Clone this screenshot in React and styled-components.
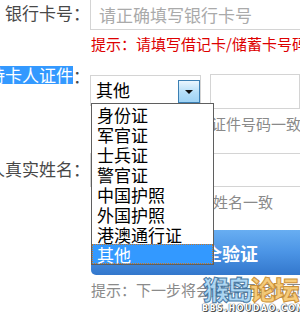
import React from 'react'
import styled, {createGlobalStyle} from 'styled-components'

const Global = createGlobalStyle`
    html, body {
        margin: 0;
        padding: 0;
        overflow: hidden;
        background: #fff;
    }
    body {
        font-family: "Noto Sans CJK SC", "Noto Sans", sans-serif;
    }
`

const Page = styled.form`
    position: relative;
    width: 300px;
    height: 316px;
    overflow: hidden;
`

const Row = styled.div`
    display: flex;
    align-items: ${p => p.top ? 'flex-start' : 'center'};
    height: ${p => p.h}px;
    margin-top: ${p => p.gap || 0}px;
`

const Label = styled.label`
    flex: 0 0 90px;
    min-width: 0;
    display: flex;
    justify-content: flex-end;
    white-space: nowrap;
    font-size: 17px;
    line-height: 20px;
    color: #484848;
    margin-top: ${p => p.shift || 0}px;
`

const Picked = styled.span`
    display: inline-block;
    height: 18px;
    line-height: 18px;
    background: #3399ff;
    color: #fff;
`

const Field = styled.div`
    flex: 0 0 auto;
    box-sizing: border-box;
    width: ${p => p.w}px;
    height: 100%;
    margin-left: ${p => p.left || 0}px;
    border: 1px solid #d4d4d4;
    border-top-width: ${p => p.open ? 0 : 1}px;
    display: flex;
    align-items: center;
    padding-left: 8px;
    font-size: 17px;
    color: #aaa;
    white-space: nowrap;
`

const Hint = styled.div`
    margin-top: ${p => p.gap}px;
    padding-left: ${p => p.indent || 91}px;
    height: 20px;
    line-height: 20px;
    font-size: 15px;
    white-space: nowrap;
    color: ${p => p.warn ? '#dd0000' : '#8a8a8a'};
`

const Select = styled.div`
    position: relative;
    box-sizing: border-box;
    width: 126px;
    height: 31px;
    margin-top: 1px;
    border: 1px solid #d4d4d4;
    display: flex;
    align-items: flex-start;
    padding-top: 4px;
`

const Value = styled.span`
    flex: 1;
    padding-left: 5px;
    font-size: 17px;
    line-height: 20px;
    color: #000;
`

const Arrow = styled.span`
    box-sizing: border-box;
    width: 22px;
    height: 23px;
    border: 1px solid #3b7fb3;
    background: linear-gradient(#eaf6fe, #b4def8 55%, #9fd3f5);
    display: flex;
    align-items: center;
    justify-content: center;
    &::after {
        content: '';
        border-left: 4px solid transparent;
        border-right: 4px solid transparent;
        border-top: 4px solid #111;
    }
`

const List = styled.ul`
    position: absolute;
    left: 0;
    top: 27px;
    z-index: 2;
    box-sizing: border-box;
    width: 123px;
    margin: 0;
    padding: 0;
    list-style: none;
    background: #fff;
    border: 1px solid #5f5f5f;
`

const Item = styled.li`
    box-sizing: border-box;
    height: 20px;
    line-height: 19px;
    padding-left: 4px;
    font-size: 17px;
    white-space: nowrap;
    color: ${p => p.on ? '#fff' : '#000'};
    background: ${p => p.on ? '#3399ff' : 'transparent'};
    border: 1px dotted ${p => p.on ? '#c8782a' : 'transparent'};
`

const Submit = styled.button`
    display: block;
    box-sizing: border-box;
    width: 262px;
    height: 45px;
    margin: 18px 0 0 91px;
    border: none;
    border-radius: 5px;
    background: linear-gradient(#68aef2, #4b94e5 50%, #3377cc);
    color: #fff;
    font-family: inherit;
    font-size: 18px;
    font-weight: bold;
`

const Mark = styled.div`
    position: absolute;
    left: 202px;
    top: 274px;
    width: 96px;
    text-align: center;
    pointer-events: none;
`

const Brand = styled.div`
    font-size: 26px;
    font-weight: 900;
    line-height: 30px;
    letter-spacing: -2.5px;
    white-space: nowrap;
`

const Part = styled.span`
    color: ${p => p.tone};
    -webkit-text-stroke: 1px ${p => p.edge};
    opacity: 0.92;
`

const Site = styled.div`
    font-family: "DejaVu Sans", sans-serif;
    font-size: 8px;
    font-weight: bold;
    line-height: 9px;
    letter-spacing: 1.4px;
    color: #fff;
    text-shadow: 0 0 1px #333, 0 0 1px #333, 1px 1px 0 #555;
`

const kinds = ['身份证', '军官证', '士兵证', '警官证', '中国护照', '外国护照', '港澳通行证', '其他']

const App = () => {
    return (
        <Page onSubmit={e => e.preventDefault()}>
            <Global />
            <Row h={30}>
                <Label shift={-4}>银行卡号：</Label>
                <Field w={220} open>请正确填写银行卡号</Field>
            </Row>
            <Hint warn gap={4}>提示：请填写借记卡/储蓄卡号码</Hint>
            <Row h={35} gap={20} top>
                <Label shift={-8}><Picked>持卡人证件</Picked>：</Label>
                <Select>
                    <Value>其他</Value>
                    <Arrow />
                    <List>
                        {kinds.map(k => (
                            <Item key={k} on={k === '其他'}>{k}</Item>
                        ))}
                    </List>
                </Select>
                <Field w={90} left={9} />
            </Row>
            <Hint gap={5}>提示：须与所填写证件号码一致</Hint>
            <Row h={34} gap={19}>
                <Label shift={-2}>持卡人真实姓名：</Label>
                <Field w={220} />
            </Row>
            <Hint gap={5} indent={93}>提示：须与身份证姓名一致</Hint>
            <Submit type="submit">安全验证</Submit>
            <Hint gap={5}>提示：下一步将会跳转至银行页面开通</Hint>
            <Mark>
                <Brand>
                    <Part tone="#a9d6f5" edge="#3a6f9c">猴岛</Part>
                    <Part tone="#f6c870" edge="#c98a2a">论坛</Part>
                </Brand>
                <Site>BBS.HOUDAO.COM</Site>
            </Mark>
        </Page>
    )
}

export default App
